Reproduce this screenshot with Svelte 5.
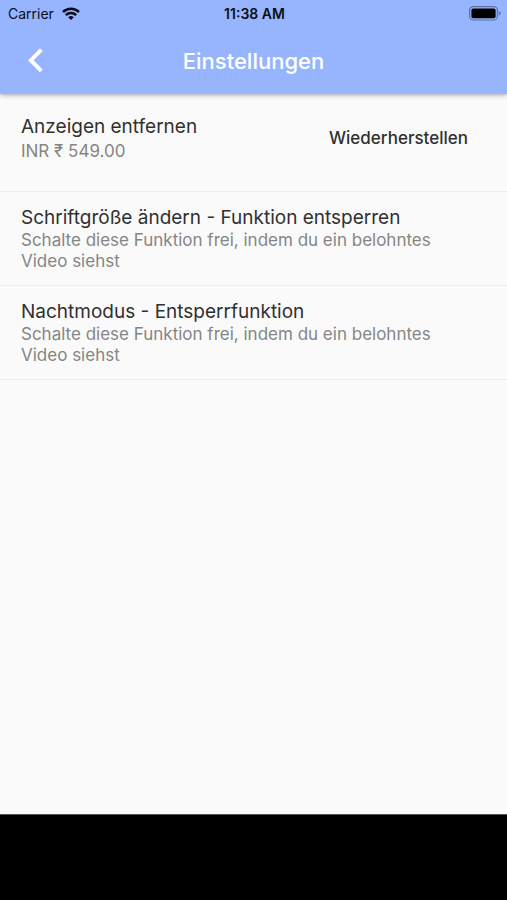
<script>
  const features = [
    {
      title: 'Schriftgröße ändern - Funktion entsperren',
      text: 'Schalte diese Funktion frei, indem du ein belohntes Video siehst'
    },
    {
      title: 'Nachtmodus - Entsperrfunktion',
      text: 'Schalte diese Funktion frei, indem du ein belohntes Video siehst'
    }
  ];
</script>

<div class="screen">
  <header>
    <div class="status">
      <div class="carrier">
        <span>Carrier</span>
        <svg class="wifi" viewBox="0 0 18 13" aria-hidden="true">
          <g fill="none" stroke="#0b0e16" stroke-width="2.5">
            <path d="M1 5 A11.5 11.5 0 0 1 17 5" />
            <path d="M3.8 8.2 A7.5 7.5 0 0 1 14.2 8.2" />
          </g>
          <path d="M6.2 10.2 A4.4 4.4 0 0 1 11.8 10.2 L9 12.9 Z" fill="#0b0e16" />
        </svg>
      </div>
      <span class="time">11:38 AM</span>
      <svg class="battery" viewBox="0 0 32 15" aria-hidden="true">
        <rect x="0.6" y="0.6" width="27.8" height="13.4" rx="3.6" fill="none" stroke="#5c72a4" stroke-width="1.2" />
        <rect x="2.4" y="2.4" width="24.2" height="9.8" rx="1.8" fill="#000" />
        <path d="M29.8 5 Q31.6 5.6 31.6 7.3 Q31.6 9 29.8 9.6 Z" fill="#5c72a4" />
      </svg>
    </div>
    <div class="bar">
      <button class="back" aria-label="Zurück">
        <svg viewBox="0 0 16 26" aria-hidden="true">
          <path d="M13.3 1.6 L2.9 12.4 L13.3 22.8" fill="none" stroke="#fff" stroke-width="3.9" />
        </svg>
      </button>
      <h1>Einstellungen</h1>
    </div>
  </header>

  <main>
    <section class="row purchase">
      <div>
        <h2>Anzeigen entfernen</h2>
        <p>INR ₹ 549.00</p>
      </div>
      <button class="restore">Wiederherstellen</button>
    </section>

    {#each features as feature}
      <button class="row feature">
        <span class="title">{feature.title}</span>
        <span class="text">{feature.text}</span>
      </button>
    {/each}
  </main>

  <footer></footer>
</div>

<style>
  :global(body) {
    margin: 0;
    background: #fafafa;
  }

  .screen {
    display: flex;
    flex-direction: column;
    min-height: 100vh;
    background: #fafafa;
    font-family: Inter, 'Liberation Sans', sans-serif;
    color: #303030;
  }

  button {
    padding: 0;
    border: none;
    background: none;
    font-family: inherit;
    color: inherit;
    cursor: pointer;
  }

  header {
    background: #97b5ff;
    box-shadow: 0 1px 5px rgba(0, 0, 0, 0.35);
  }

  .status {
    display: grid;
    grid-template-columns: 1fr auto 1fr;
    align-items: center;
    height: 27px;
    padding: 0 6px 0 8px;
    font-size: 14px;
    color: #0b0e16;
  }

  .carrier {
    display: flex;
    align-items: center;
    gap: 8px;
  }

  .wifi {
    width: 18px;
    height: 13px;
  }

  .time {
    font-weight: 600;
  }

  .battery {
    justify-self: end;
    width: 32px;
    height: 15px;
  }

  .bar {
    display: grid;
    grid-template-columns: 72px 1fr 72px;
    align-items: center;
    height: 67px;
  }

  .back {
    display: flex;
    align-items: center;
    justify-content: center;
    height: 48px;
  }

  .back svg {
    width: 16px;
    height: 26px;
  }

  h1 {
    margin: 0;
    font-size: 22px;
    font-weight: 500;
    line-height: 26px;
    text-align: center;
    color: #fff;
  }

  main {
    flex: 1;
  }

  .row {
    box-sizing: border-box;
    width: 100%;
    border-bottom: 1px solid #eee;
  }

  .purchase {
    display: flex;
    align-items: flex-start;
    justify-content: space-between;
    padding: 21px 39px 29px 21px;
  }

  h2,
  .title {
    margin: 0;
    font-size: 19px;
    font-weight: 400;
    line-height: 24px;
  }

  p,
  .text {
    margin: 0;
    font-size: 17px;
    line-height: 21px;
    color: #858585;
  }

  .purchase p {
    padding-top: 2px;
  }

  .restore {
    font-size: 17px;
    font-weight: 500;
    line-height: 46px;
  }

  .feature {
    display: flex;
    flex-direction: column;
    padding: 14px 70px 13px 21px;
    text-align: left;
  }

  footer {
    height: 85px;
    border-top: 1px solid #555;
    background: #000;
  }
</style>
